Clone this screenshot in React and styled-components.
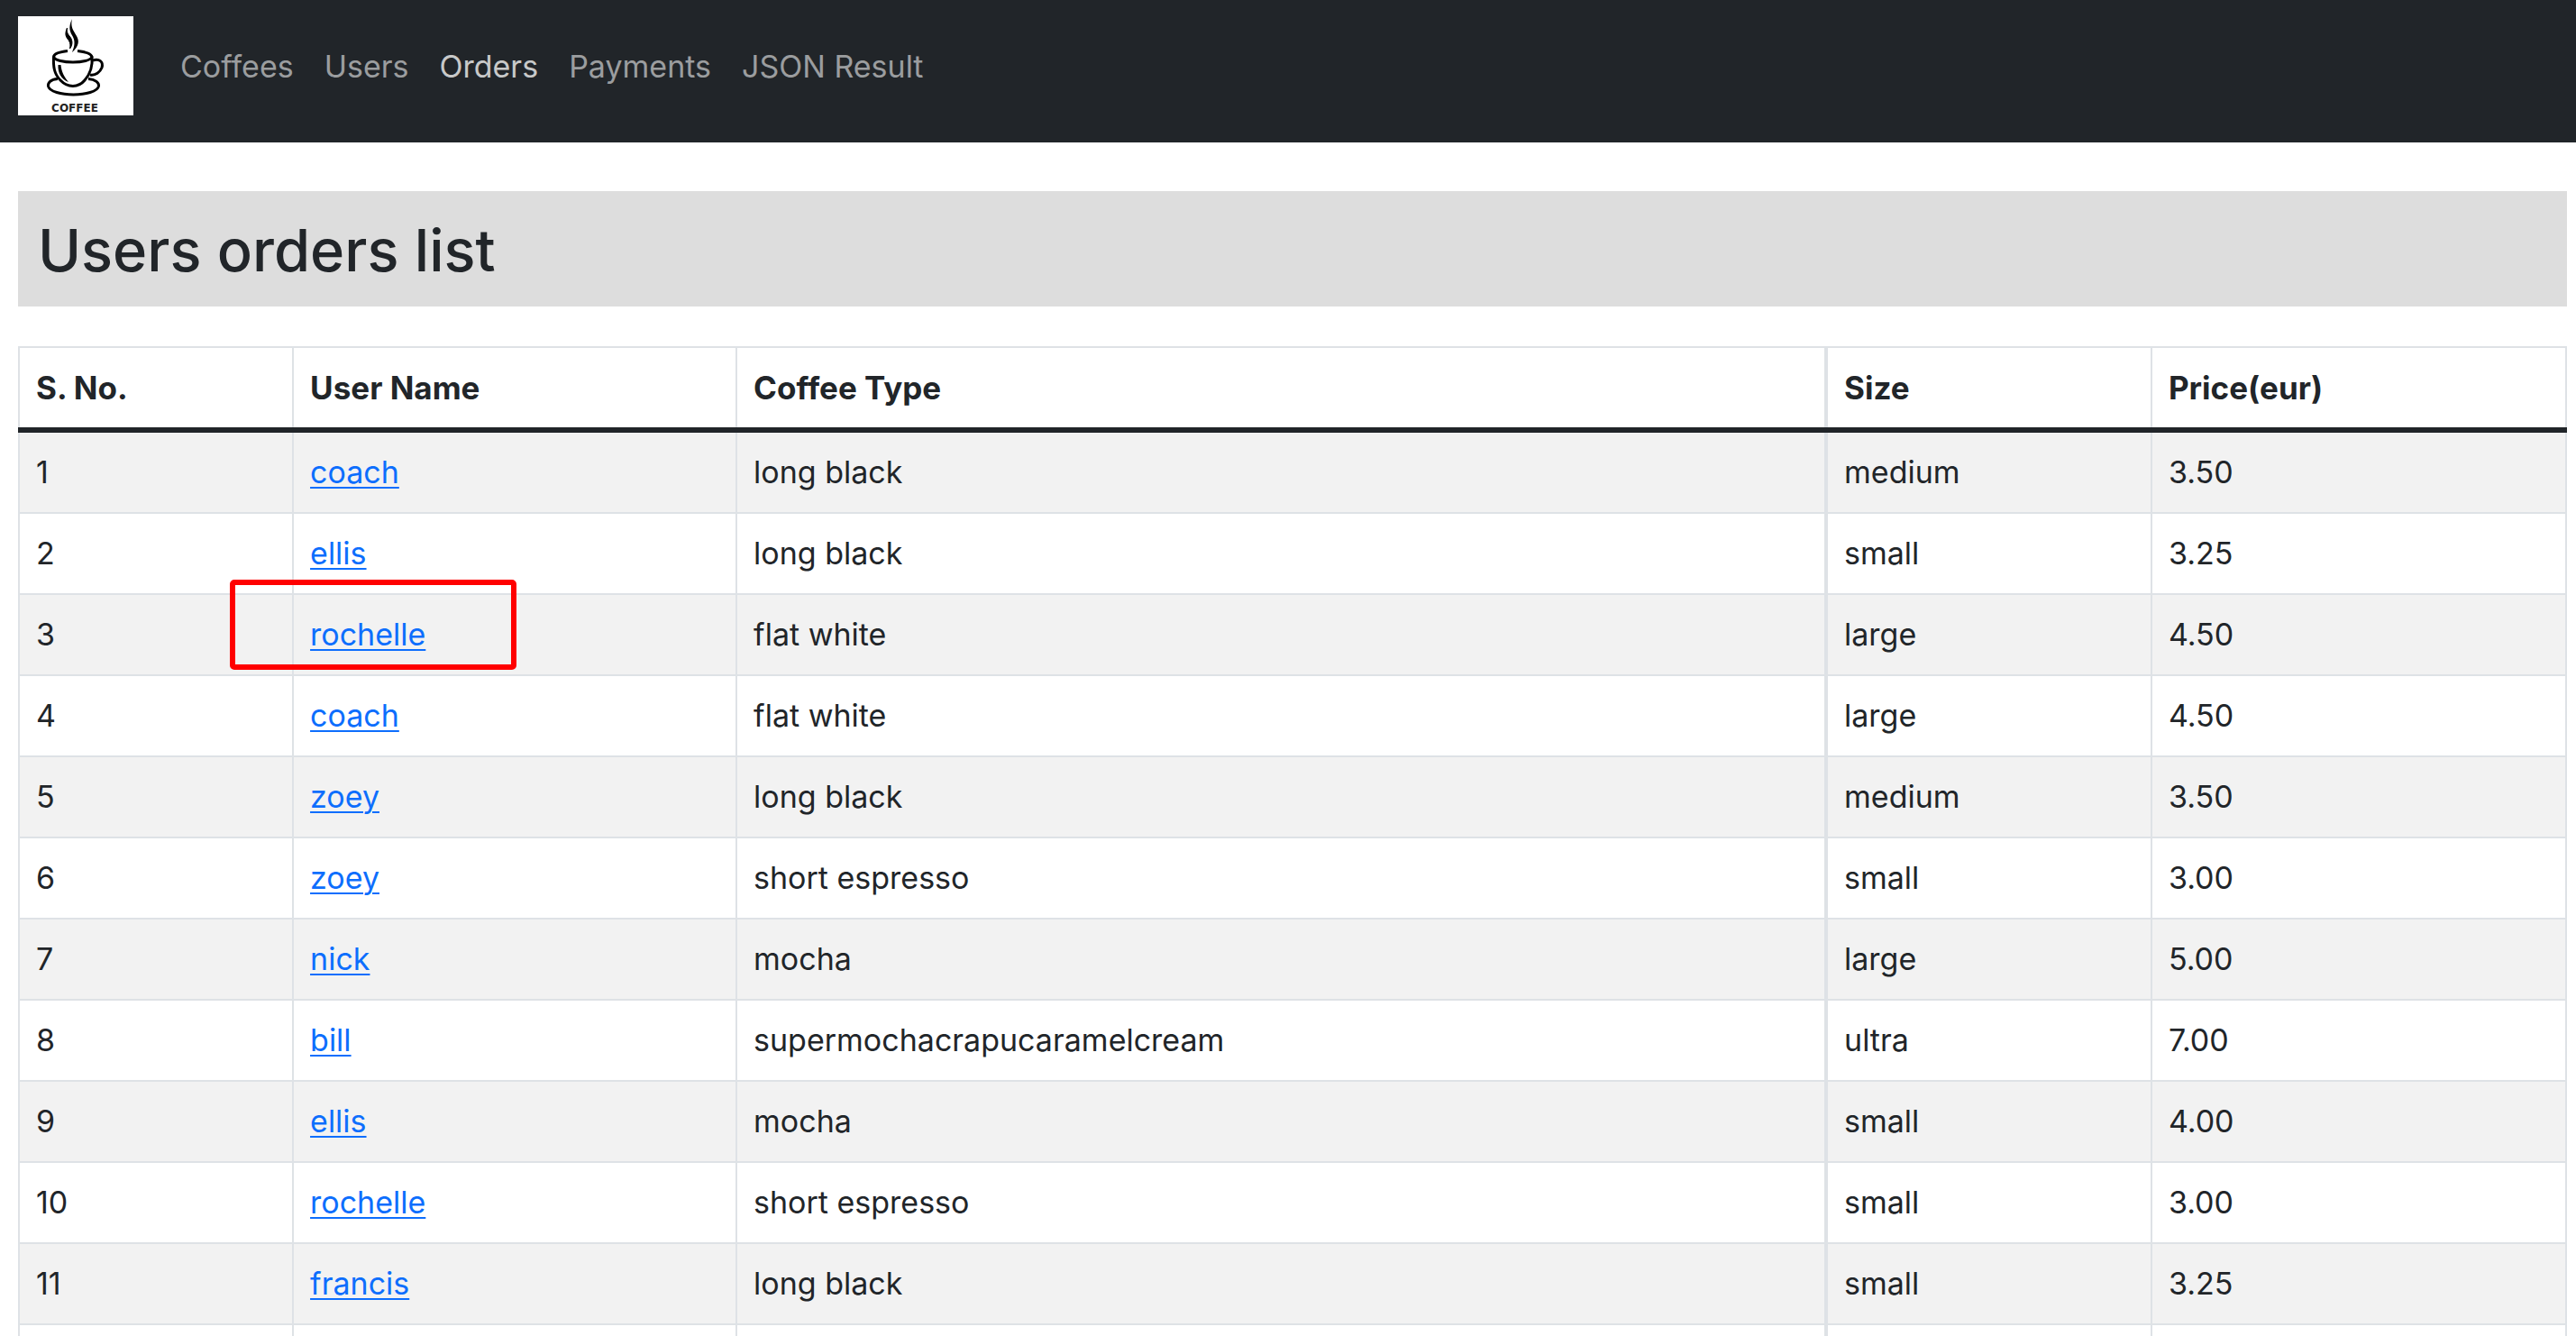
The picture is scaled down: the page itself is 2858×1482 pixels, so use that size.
import React from "react";
import styled, { createGlobalStyle } from "styled-components";

const GlobalStyle = createGlobalStyle`
  *, *::before, *::after { box-sizing: border-box; }
  body {
    margin: 0;
    background: #fff;
    color: #212529;
    font-family: Inter, "Liberation Sans", sans-serif;
    font-size: 34px;
    line-height: 54px;
  }
`;

const Page = styled.div`
  height: 100vh;
  overflow: hidden;
`;

const Navbar = styled.nav`
  display: flex;
  align-items: flex-start;
  gap: 52px;
  padding: 18px 20px 30px;
  background: #212529;
`;

const Brand = styled.a`
  display: block;
  width: 128px;
  height: 110px;
  background: #fff;
`;

const NavList = styled.ul`
  display: flex;
  gap: 34px;
  margin: 0;
  padding: 29px 0 0;
  list-style: none;
`;

const NavLink = styled.a`
  display: block;
  color: ${(p) => (p.$active ? "#c8c9c9" : "#9b9d9f")};
  text-decoration: none;
`;

const Main = styled.main`
  padding: 54px 10px 0 20px;
`;

const Title = styled.h1`
  margin: 0 0 44px;
  padding: 24px 22px 20px;
  background: #ddd;
  font-size: 65px;
  font-weight: 500;
  line-height: 84px;
`;

const Table = styled.table`
  width: 100%;
  table-layout: fixed;
  border-collapse: collapse;
`;

const Col = styled.col`
  width: ${(p) => p.$width};
`;

const HeadCell = styled.th`
  padding: 17px 18px;
  border: 2px solid #dee2e6;
  border-left-width: ${(p) => (p.$divider ? 4 : 2)}px;
  border-bottom: 6px solid #212529;
  font-size: 35px;
  font-weight: 700;
  text-align: left;
`;

const Row = styled.tr`
  background: #fff;
  &:nth-child(odd) { background: #f2f2f2; }
`;

const Cell = styled.td`
  padding: 17px 18px;
  border: 2px solid #dee2e6;
  border-left-width: ${(p) => (p.$divider ? 4 : 2)}px;
`;

const UserAnchor = styled.a`
  position: relative;
  color: #0d6efd;
  text-decoration: underline;
  text-decoration-thickness: 2px;
  text-underline-offset: 4px;
`;

const Highlight = styled.span`
  position: absolute;
  left: -89px;
  top: -40px;
  width: 318px;
  height: 100px;
  border: 6px solid #f00;
  border-radius: 5px;
  pointer-events: none;
`;

const links = ["Coffees", "Users", "Orders", "Payments", "JSON Result"];

const columns = [
  { label: "S. No.", width: "10.76%" },
  { label: "User Name", width: "17.41%" },
  { label: "Coffee Type", width: "42.78%" },
  { label: "Size", width: "12.77%", divider: true },
  { label: "Price(eur)", width: "16.28%" },
];

const orders = [
  ["coach", "long black", "medium", "3.50"],
  ["ellis", "long black", "small", "3.25"],
  ["rochelle", "flat white", "large", "4.50", true],
  ["coach", "flat white", "large", "4.50"],
  ["zoey", "long black", "medium", "3.50"],
  ["zoey", "short espresso", "small", "3.00"],
  ["nick", "mocha", "large", "5.00"],
  ["bill", "supermochacrapucaramelcream", "ultra", "7.00"],
  ["ellis", "mocha", "small", "4.00"],
  ["rochelle", "short espresso", "small", "3.00"],
  ["francis", "long black", "small", "3.25"],
];

const LogoText = styled.text`
  font: 700 12px "DejaVu Sans", sans-serif;
  fill: #222;
`;

function CoffeeLogo() {
  return (
    <svg width="128" height="110" viewBox="0 0 128 110" fill="none" stroke="#000" strokeWidth="3">
      <path d="M44 69.500C36 70 33 74 33.500 77.500C36 90 87 90 89.500 77.500C90 74 86 70 78 69.500" />
      <path d="M39.500 45C39 56 40 64 47 71C55 79.500 67 79.500 74 71C81 63 83 55 82 45" />
      <path d="M55 38.500C46 39.500 40 41.500 39.500 45C42 53 80 53 82 45C81 41.500 75 39.500 66 38.500" />
      <path d="M83 49C90 47 95 50 93 57C91 62 86 66 80 65" />
      <path d="M44.500 54C44 63 48 70 56 73C51 67 48 61 47.500 54Z" fill="#000" stroke="none" />
      <path d="M60 3C55 13 58 18 61 23C64 29 62 35 60 40C68 33 68 27 65 22C61 15 58 12 60 3Z" fill="#000" stroke="none" />
      <path d="M54.500 13C51 21 54 24 56.500 27C58.500 31 58 33 57.500 36C61.500 31 60 25 57 22C54 18 54 16 54.500 13Z" fill="#000" stroke="#000" strokeWidth="1" />
      <LogoText x="63" y="106" textAnchor="middle" stroke="none">COFFEE</LogoText>
    </svg>
  );
}

export default function App() {
  return (
    <Page>
      <GlobalStyle />
      <Navbar>
        <Brand href="#" aria-label="Coffee home">
          <CoffeeLogo />
        </Brand>
        <NavList>
          {links.map((label) => (
            <li key={label}>
              <NavLink href="#" $active={label === "Orders"}>{label}</NavLink>
            </li>
          ))}
        </NavList>
      </Navbar>
      <Main>
        <Title>Users orders list</Title>
        <Table>
          <colgroup>
            {columns.map((c) => <Col key={c.label} $width={c.width} />)}
          </colgroup>
          <thead>
            <tr>
              {columns.map((c) => (
                <HeadCell key={c.label} scope="col" $divider={c.divider}>{c.label}</HeadCell>
              ))}
            </tr>
          </thead>
          <tbody>
            {orders.map(([user, coffee, size, price, marked], i) => (
              <Row key={i}>
                <Cell>{i + 1}</Cell>
                <Cell>
                  <UserAnchor href="#">
                    {user}
                    {marked && <Highlight />}
                  </UserAnchor>
                </Cell>
                <Cell>{coffee}</Cell>
                <Cell $divider>{size}</Cell>
                <Cell>{price}</Cell>
              </Row>
            ))}
            <Row>
              {columns.map((c) => <Cell key={c.label} $divider={c.divider} />)}
            </Row>
          </tbody>
        </Table>
      </Main>
    </Page>
  );
}
